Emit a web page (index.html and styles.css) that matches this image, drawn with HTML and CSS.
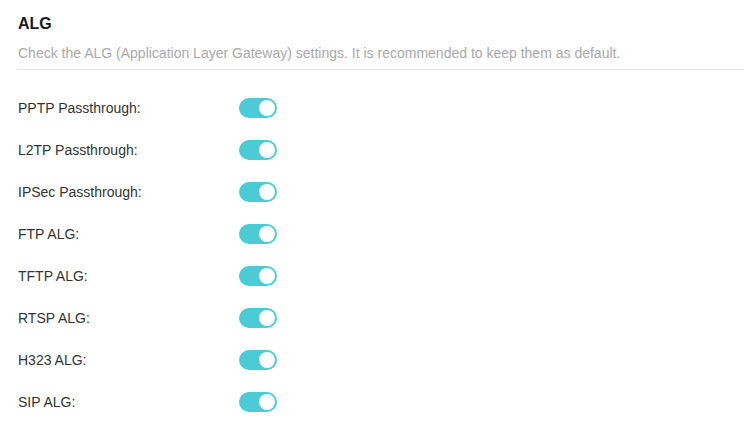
FILE: index.html
```html
<!DOCTYPE html>
<html>
<head>
<meta charset="utf-8">
<link rel="stylesheet" href="styles.css">
</head>
<body>
<section class="panel">
  <header class="panel-head">
    <h2 class="panel-title">ALG</h2>
    <p class="panel-desc">Check the ALG (Application Layer Gateway) settings. It is recommended to keep them as default.</p>
  </header>
  <div class="rows">
    <div class="row"><span class="label">PPTP Passthrough:</span><span class="switch on"><span class="knob"></span></span></div>
    <div class="row"><span class="label">L2TP Passthrough:</span><span class="switch on"><span class="knob"></span></span></div>
    <div class="row"><span class="label">IPSec Passthrough:</span><span class="switch on"><span class="knob"></span></span></div>
    <div class="row"><span class="label">FTP ALG:</span><span class="switch on"><span class="knob"></span></span></div>
    <div class="row"><span class="label">TFTP ALG:</span><span class="switch on"><span class="knob"></span></span></div>
    <div class="row"><span class="label">RTSP ALG:</span><span class="switch on"><span class="knob"></span></span></div>
    <div class="row"><span class="label">H323 ALG:</span><span class="switch on"><span class="knob"></span></span></div>
    <div class="row"><span class="label">SIP ALG:</span><span class="switch on"><span class="knob"></span></span></div>
  </div>
</section>
</body>
</html>
```

FILE: styles.css
```css
html, body {
  margin: 0;
  padding: 0;
  background: #fff;
}

body {
  font-family: "Liberation Sans", Arial, sans-serif;
  color: #333;
}

.panel {
  padding: 0 0 0 18px;
}

.panel-head {
  padding-top: 14px;
  border-bottom: 1px solid #e5e5e5;
  padding-bottom: 8px;
}

.panel-title {
  margin: 0;
  font-size: 16px;
  line-height: 20px;
  font-weight: bold;
  color: #1a1a1a;
}

.panel-desc {
  margin: 11px 0 0;
  font-size: 14px;
  line-height: 16px;
  color: #a9a9a9;
}

.rows {
  display: flex;
  flex-direction: column;
  padding-top: 17px;
}

.row {
  display: flex;
  align-items: center;
  height: 42px;
}

.label {
  width: 221px;
  font-size: 14px;
  color: #333;
}

.switch {
  position: relative;
  display: inline-block;
  width: 38px;
  height: 20px;
  border-radius: 10px;
  background: #4acbd6;
}

.knob {
  position: absolute;
  top: 2px;
  right: 2px;
  width: 16px;
  height: 16px;
  border-radius: 50%;
  background: #fff;
}
```
